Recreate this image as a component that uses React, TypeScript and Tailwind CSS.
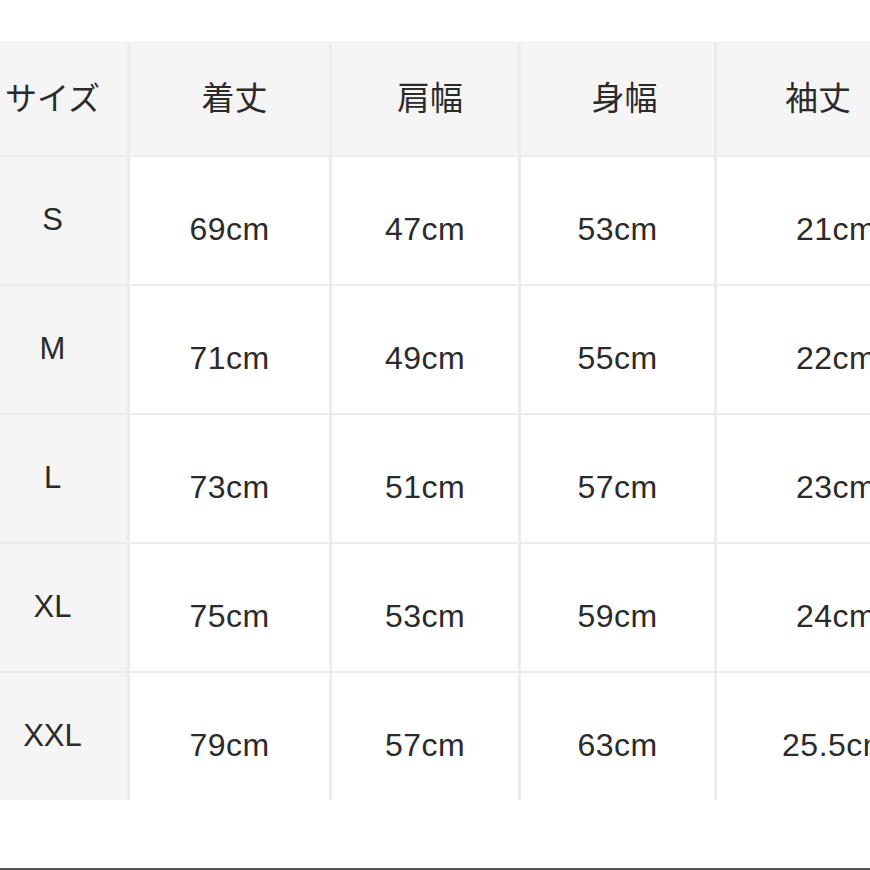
const headers = ["着丈", "肩幅", "身幅", "袖丈"];

const rows: { size: string; values: string[] }[] = [
  { size: "S", values: ["69cm", "47cm", "53cm", "21cm"] },
  { size: "M", values: ["71cm", "49cm", "55cm", "22cm"] },
  { size: "L", values: ["73cm", "51cm", "57cm", "23cm"] },
  { size: "XL", values: ["75cm", "53cm", "59cm", "24cm"] },
  { size: "XXL", values: ["79cm", "57cm", "63cm", "25.5cm"] },
];

const font = "font-['Liberation_Sans','Noto_Sans_CJK_JP',sans-serif]";

// header padding per column so labels sit where the original puts them
const headPad = ["pl-[10px]", "pl-[10px]", "pl-[14px]", "pr-[36px]"];

export default function App() {
  return (
    <div className={`w-[870px] h-[870px] bg-white overflow-hidden flex flex-col ${font} text-[#2b2b2b]`}>
      <div className="h-[42px]" />
      <div className="grid grid-cols-[127px_199px_186px_193px_238px] gap-x-[3px] gap-y-[2px] bg-[#ececec] w-[955px] pt-[1px]">
        <div className="h-[112px] bg-[#f5f5f5] flex items-center justify-center pr-[22px] text-[32px]">
          サイズ
        </div>
        {headers.map((h, i) => (
          <div
            key={h}
            className={`h-[112px] bg-[#f5f5f5] flex items-center justify-center text-[33px] ${headPad[i]}`}
          >
            {h}
          </div>
        ))}
        {rows.map((r) => (
          <Row key={r.size} size={r.size} values={r.values} />
        ))}
      </div>
      <div className="flex-1 bg-white" />
      <div className="h-[2px] bg-[#555555]" />
    </div>
  );
}

function Row({ size, values }: { size: string; values: string[] }) {
  return (
    <>
      <div className="h-[127px] bg-[#f5f5f5] flex items-center justify-center pr-[22px] text-[31px]">
        {size}
      </div>
      {values.map((v, i) => (
        <div
          key={i}
          className="h-[127px] bg-white flex items-center justify-center pt-[16px] text-[32px] tracking-[0.5px]"
        >
          {v}
        </div>
      ))}
    </>
  );
}
